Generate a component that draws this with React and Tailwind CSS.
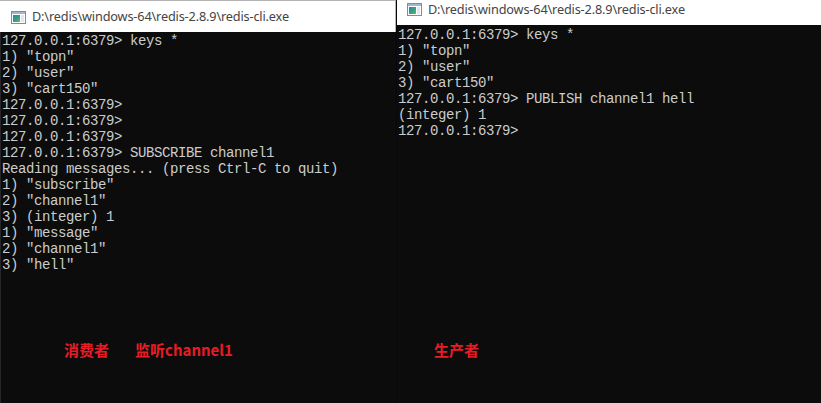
import React from "react";

const leftLines = [
  "127.0.0.1:6379> keys *",
  '1) "topn"',
  '2) "user"',
  '3) "cart150"',
  "127.0.0.1:6379>",
  "127.0.0.1:6379>",
  "127.0.0.1:6379>",
  "127.0.0.1:6379> SUBSCRIBE channel1",
  "Reading messages... (press Ctrl-C to quit)",
  '1) "subscribe"',
  '2) "channel1"',
  "3) (integer) 1",
  '1) "message"',
  '2) "channel1"',
  '3) "hell"',
];

const rightLines = [
  "127.0.0.1:6379> keys *",
  '1) "topn"',
  '2) "user"',
  '3) "cart150"',
  "127.0.0.1:6379> PUBLISH channel1 hell",
  "(integer) 1",
  "127.0.0.1:6379>",
];

const title = "D:\\redis\\windows-64\\redis-2.8.9\\redis-cli.exe";

const ConsoleIcon = () => (
  <svg width="15" height="13" viewBox="0 0 15 13" className="shrink-0">
    <rect x="0.5" y="0.5" width="14" height="12" fill="#ffffff" stroke="#8a8a8a" />
    <rect x="1" y="1" width="13" height="2" fill="#9fb7cf" />
    <defs>
      <linearGradient id="g" x1="0" y1="0" x2="1" y2="1">
        <stop offset="0" stopColor="#2f7fbf" />
        <stop offset="0.6" stopColor="#3aa17a" />
        <stop offset="1" stopColor="#6bbf5a" />
      </linearGradient>
    </defs>
    <rect x="2" y="4" width="7" height="7" fill="url(#g)" />
    <rect x="10" y="4" width="3" height="7" fill="#dfe8f0" />
  </svg>
);

const TermLines = ({ lines }) => (
  <div className="font-['Liberation_Mono',monospace] text-[14px] tracking-[-0.4px] leading-[16px] text-[#cccccc] whitespace-pre">
    {lines.map((l, i) => (
      <div key={i}>{l}</div>
    ))}
  </div>
);

const Label = ({ children }) => (
  <span className="font-['Noto_Sans_CJK_SC',sans-serif] font-bold text-[15px] leading-[20px] text-[#e81c24]">
    {children}
  </span>
);

export default function App() {
  return (
    <div className="flex w-[821px] h-[403px] overflow-hidden bg-[#0c0c0c]">
      {/* consumer window */}
      <div className="flex flex-col w-[397px] shrink-0 border-r border-[#080808]">
        <div className="flex items-center gap-[6px] h-[32px] pl-[11px] bg-white border-t border-r border-[#b4b4b4] pt-[1px]">
          <ConsoleIcon />
          <span className="font-['Noto_Sans',sans-serif] text-[12.7px] text-[#444444] tracking-[-0.15px]">
            {title}
          </span>
        </div>
        <div className="flex-1 bg-[#0c0c0c] pl-[1px] pt-[1px] border-l border-[#262626]">
          <TermLines lines={leftLines} />
          <div className="flex mt-[67px] pl-[62px] gap-[26px]">
            <Label>消费者</Label>
            <Label>监听channel1</Label>
          </div>
        </div>
      </div>
      {/* producer window */}
      <div className="flex flex-col flex-1">
        <div className="flex items-start gap-[6px] h-[25px] pl-[10px] pt-[3px] bg-white">
          <ConsoleIcon />
          <span className="font-['Noto_Sans',sans-serif] text-[12.7px] leading-[13px] text-[#444444] tracking-[-0.15px]">
            {title}
          </span>
        </div>
        <div className="flex-1 bg-[#0c0c0c] pl-[1px] pt-[2px]">
          <TermLines lines={rightLines} />
          <div className="flex mt-[201px] pl-[36px]">
            <Label>生产者</Label>
          </div>
        </div>
      </div>
    </div>
  );
}
